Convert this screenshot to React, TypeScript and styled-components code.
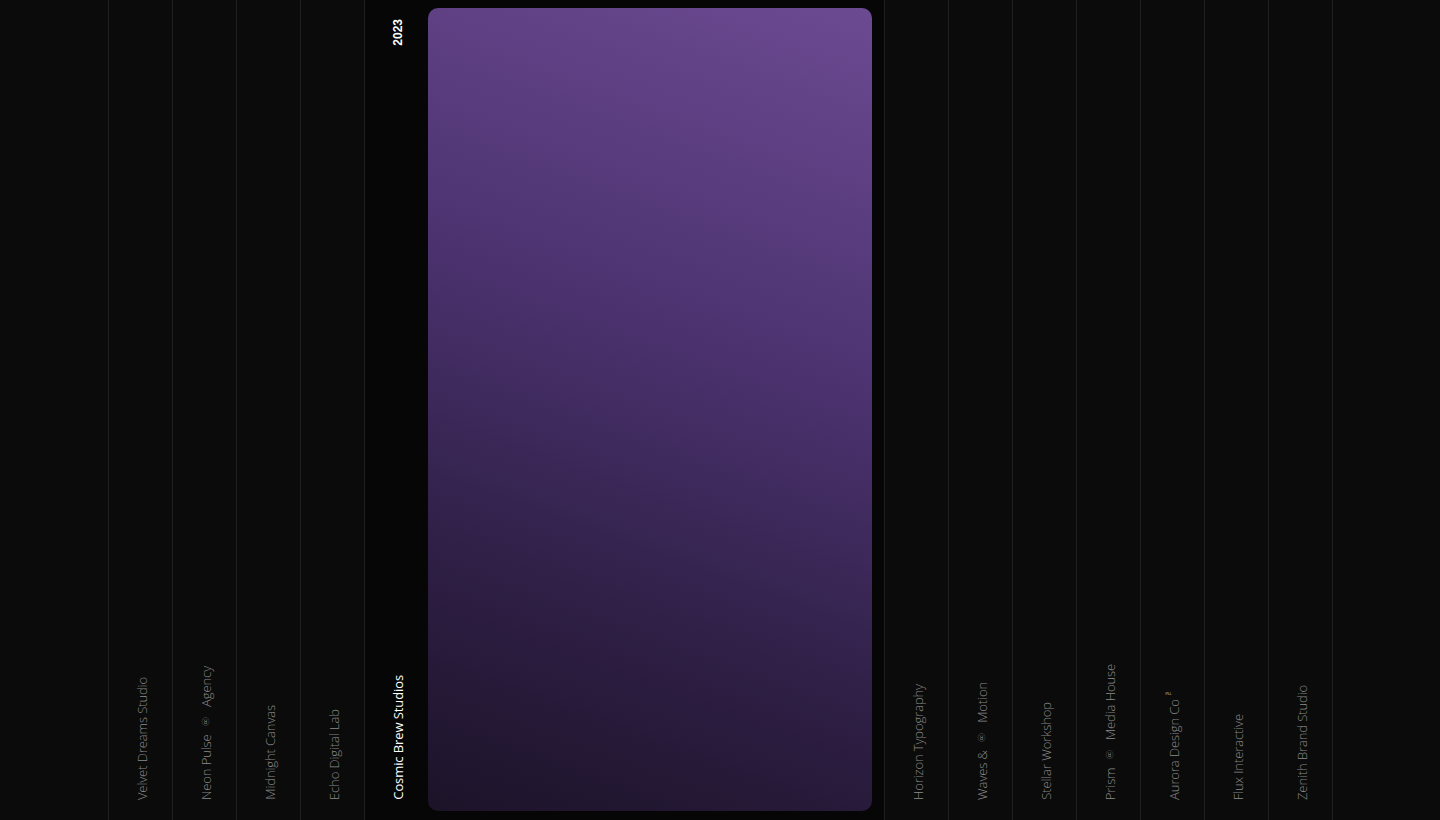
import React from 'react';
import styled, { createGlobalStyle } from 'styled-components';

const GlobalStyle = createGlobalStyle`
  html, body {
    margin: 0;
    padding: 0;
    background: #0b0b0b;
    font-family: 'Open Sans', 'Liberation Sans', sans-serif;
  }
`;

const Page = styled.div`
  height: 820px;
  display: flex;
  justify-content: center;
  background: #0b0b0b;
  overflow: hidden;
`;

const Strip = styled.div`
  display: flex;
  height: 100%;
  border-right: 1px solid #1f1f1f;
`;

const Column = styled.div`
  width: 64px;
  height: 100%;
  box-sizing: border-box;
  border-left: 1px solid #1f1f1f;
  display: flex;
  flex-direction: column;
  align-items: center;
  justify-content: flex-end;
  padding: 0 0 20px 4px;
`;

const Label = styled.span<{ $active?: boolean }>`
  writing-mode: vertical-rl;
  transform: rotate(180deg);
  font-size: 13px;
  font-weight: ${(p) => (p.$active ? 400 : 300)};
  color: ${(p) => (p.$active ? '#ffffff' : '#8a8a8a')};
  letter-spacing: -0.1px;
  white-space: nowrap;
`;

const Mark = styled.span`
  display: inline-block;
  padding: 5px 0;
  font-size: 10px;
  font-family: 'DejaVu Sans', sans-serif;
  color: #8a8a8a;
`;

const Tm = styled.sup`
  font-size: 7px;
  font-family: 'DejaVu Sans', sans-serif;
  color: #9b9470;
  vertical-align: super;
`;

const ActiveItem = styled.div`
  width: 520px;
  height: 100%;
  box-sizing: border-box;
  border-left: 1px solid #1f1f1f;
  background: #060606;
  display: flex;
  padding: 8px 12px 9px 0;
`;

const ActiveSide = styled.div`
  width: 63px;
  display: flex;
  flex-direction: column;
  align-items: center;
  justify-content: space-between;
  padding: 11px 0 11px 4px;
  box-sizing: border-box;
`;

const Year = styled.span`
  writing-mode: vertical-rl;
  transform: rotate(180deg);
  font-size: 12px;
  font-weight: 700;
  color: #ffffff;
  font-family: 'Liberation Sans', sans-serif;
`;

const Cover = styled.div`
  flex: 1;
  border-radius: 10px;
  background: linear-gradient(200deg, #6c4a92 0%, #4c3370 40%, #2d1e43 75%, #1c1328 100%);
`;

type Item = { name: React.ReactNode };

const before: Item[] = [
  { name: 'Velvet Dreams Studio' },
  { name: <>Neon Pulse <Mark>®</Mark> Agency</> },
  { name: 'Midnight Canvas' },
  { name: 'Echo Digital Lab' },
];

const after: Item[] = [
  { name: 'Horizon Typography' },
  { name: <>Waves &amp; <Mark>®</Mark> Motion</> },
  { name: 'Stellar Workshop' },
  { name: <>Prism <Mark>®</Mark> Media House</> },
  { name: <>Aurora Design Co <Tm>™</Tm></> },
  { name: 'Flux Interactive' },
  { name: 'Zenith Brand Studio' },
];

export default function App() {
  return (
    <>
      <GlobalStyle />
      <Page>
        <Strip>
          {before.map((it, i) => (
            <Column key={`b${i}`}>
              <Label>{it.name}</Label>
            </Column>
          ))}
          <ActiveItem>
            <ActiveSide>
              <Year>2023</Year>
              <Label $active>Cosmic Brew Studios</Label>
            </ActiveSide>
            <Cover />
          </ActiveItem>
          {after.map((it, i) => (
            <Column key={`a${i}`}>
              <Label>{it.name}</Label>
            </Column>
          ))}
        </Strip>
      </Page>
    </>
  );
}
